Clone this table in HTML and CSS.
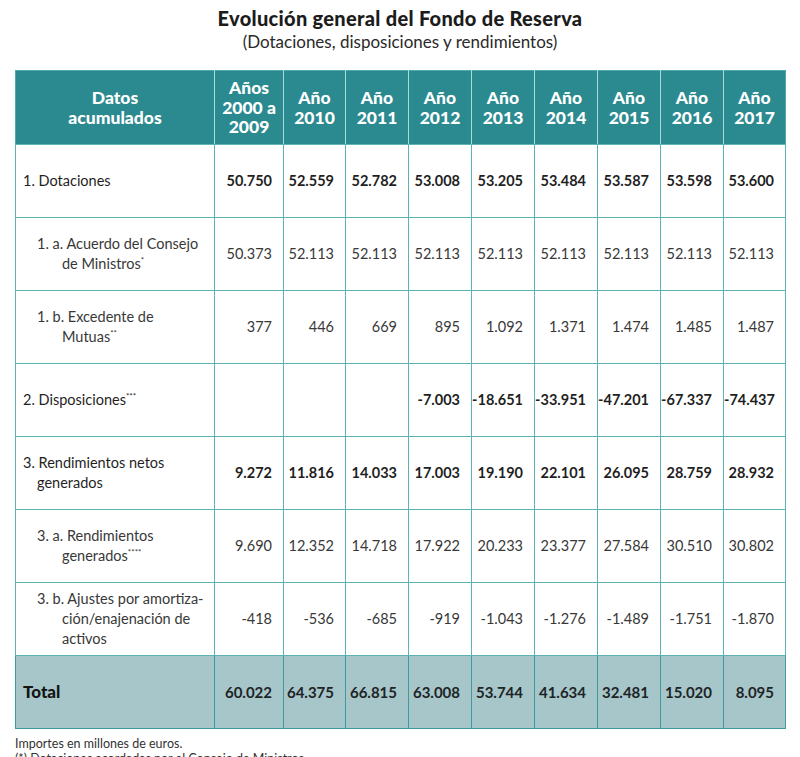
FILE: index.html
```html
<!DOCTYPE html>
<html lang="es">
<head>
<meta charset="utf-8">
<title>Evolución general del Fondo de Reserva</title>
<link rel="stylesheet" href="styles.css">
</head>
<body>
<div class="page">
  <header class="heading">
    <h1 class="title">Evolución general del Fondo de Reserva</h1>
    <p class="subtitle">(Dotaciones, disposiciones y rendimientos)</p>
  </header>
  <table class="fund">
    <colgroup>
      <col class="c-label">
      <col class="c-first">
      <col class="c-n62">
      <col class="c-n63"><col class="c-n63"><col class="c-n63"><col class="c-n63"><col class="c-n63"><col class="c-n63">
      <col class="c-n62">
    </colgroup>
    <thead>
      <tr class="head-row">
        <th>Datos<br>acumulados</th>
        <th>Años<br>2000 a<br>2009</th>
        <th>Año<br>2010</th>
        <th>Año<br>2011</th>
        <th>Año<br>2012</th>
        <th>Año<br>2013</th>
        <th>Año<br>2014</th>
        <th>Año<br>2015</th>
        <th>Año<br>2016</th>
        <th>Año<br>2017</th>
      </tr>
    </thead>
    <tbody>
      <tr class="row main">
        <td class="label lbl-main">1. Dotaciones</td>
        <td>50.750</td><td>52.559</td><td>52.782</td><td>53.008</td><td>53.205</td><td>53.484</td><td>53.587</td><td>53.598</td><td>53.600</td>
      </tr>
      <tr class="row sub">
        <td class="label lbl-sub">1. a. Acuerdo del Consejo de Ministros<sup>*</sup></td>
        <td>50.373</td><td>52.113</td><td>52.113</td><td>52.113</td><td>52.113</td><td>52.113</td><td>52.113</td><td>52.113</td><td>52.113</td>
      </tr>
      <tr class="row sub">
        <td class="label lbl-sub">1. b. Excedente de<br>Mutuas<sup>**</sup></td>
        <td>377</td><td>446</td><td>669</td><td>895</td><td>1.092</td><td>1.371</td><td>1.474</td><td>1.485</td><td>1.487</td>
      </tr>
      <tr class="row main">
        <td class="label lbl-main">2. Disposiciones<sup>***</sup></td>
        <td></td><td></td><td></td><td>-7.003</td><td>-18.651</td><td>-33.951</td><td>-47.201</td><td>-67.337</td><td>-74.437</td>
      </tr>
      <tr class="row main">
        <td class="label lbl-main">3. Rendimientos netos generados</td>
        <td>9.272</td><td>11.816</td><td>14.033</td><td>17.003</td><td>19.190</td><td>22.101</td><td>26.095</td><td>28.759</td><td>28.932</td>
      </tr>
      <tr class="row sub">
        <td class="label lbl-sub">3. a. Rendimientos<br>generados<sup>****</sup></td>
        <td>9.690</td><td>12.352</td><td>14.718</td><td>17.922</td><td>20.233</td><td>23.377</td><td>27.584</td><td>30.510</td><td>30.802</td>
      </tr>
      <tr class="row sub">
        <td class="label lbl-sub">3. b. Ajustes por amortiza-ción/enajenación de activos</td>
        <td>-418</td><td>-536</td><td>-685</td><td>-919</td><td>-1.043</td><td>-1.276</td><td>-1.489</td><td>-1.751</td><td>-1.870</td>
      </tr>
    </tbody>
    <tfoot>
      <tr class="row total">
        <td class="label lbl-total">Total</td>
        <td>60.022</td><td>64.375</td><td>66.815</td><td>63.008</td><td>53.744</td><td>41.634</td><td>32.481</td><td>15.020</td><td>8.095</td>
      </tr>
    </tfoot>
  </table>
  <div class="notes">
    <p class="note">Importes en millones de euros.</p>
    <p class="note">(*) Dotaciones acordadas por el Consejo de Ministros.</p>
  </div>
</div>
</body>
</html>
```

FILE: styles.css
```css
html, body {
  margin: 0;
  padding: 0;
  background: #ffffff;
}

body {
  font-family: Lato, "Open Sans", "Liberation Sans", sans-serif;
  color: #2a2a2a;
}

.page {
  width: 770px;
  padding: 6px 15px 0 15px;
  height: 751px;
  overflow: hidden;
}

.heading {
  text-align: center;
  height: 64px;
}

.title {
  margin: 0;
  font-size: 20px;
  font-weight: 900;
  line-height: 25px;
  color: #1c1c1c;
  letter-spacing: 0.3px;
}

.subtitle {
  margin: 0;
  font-size: 17px;
  font-weight: 400;
  line-height: 22px;
  color: #2a2a2a;
}

.fund {
  width: 770px;
  table-layout: fixed;
  border-collapse: collapse;
  border: 1.5px solid #4faaae;
}

.c-label { width: 199px; }
.c-first { width: 69px; }
.c-n62 { width: 62px; }
.c-n63 { width: 63px; }

.head-row th {
  height: 73px;
  padding: 0;
  background: #2b8a8f;
  color: #ffffff;
  font-weight: 900;
  font-size: 17.5px;
  line-height: 19.5px;
  text-align: center;
  vertical-align: middle;
  border-left: 1px solid #a9dadb;
  border-bottom: 1px solid #5fb6b9;
}

.head-row th:first-child {
  border-left: none;
}

.row td {
  height: 72px;
  padding: 0 11px 0 0;
  border: 1px solid #5bb3b6;
  text-align: right;
  vertical-align: middle;
  white-space: nowrap;
  font-size: 14.5px;
  line-height: 20px;
}

.main td {
  font-weight: 700;
  color: #1f1f1f;
}

.sub td {
  font-weight: 400;
  color: #383838;
}

.row td.label {
  text-align: left;
  white-space: normal;
  padding-right: 6px;
  font-size: 14.5px;
}

.main td.label {
  font-weight: 400;
  color: #1f1f1f;
}

.row td.lbl-main {
  padding-left: 21px;
  text-indent: -14px;
}

.row td.lbl-sub {
  padding-left: 46px;
  text-indent: -25px;
  color: #383838;
}

sup {
  font-size: 8px;
  line-height: 0;
  vertical-align: 6px;
}

.total td {
  background: #a6c6ca;
  border-color: #3f9a9e;
  font-weight: 700;
  color: #1e2426;
  font-size: 15px;
}

.row td.lbl-total {
  padding-left: 7px;
  font-weight: 900;
  font-size: 17px;
  color: #141414;
}

.notes {
  padding-top: 7px;
}

.note {
  margin: 0;
  font-size: 12.5px;
  line-height: 15px;
  color: #333333;
}
```
